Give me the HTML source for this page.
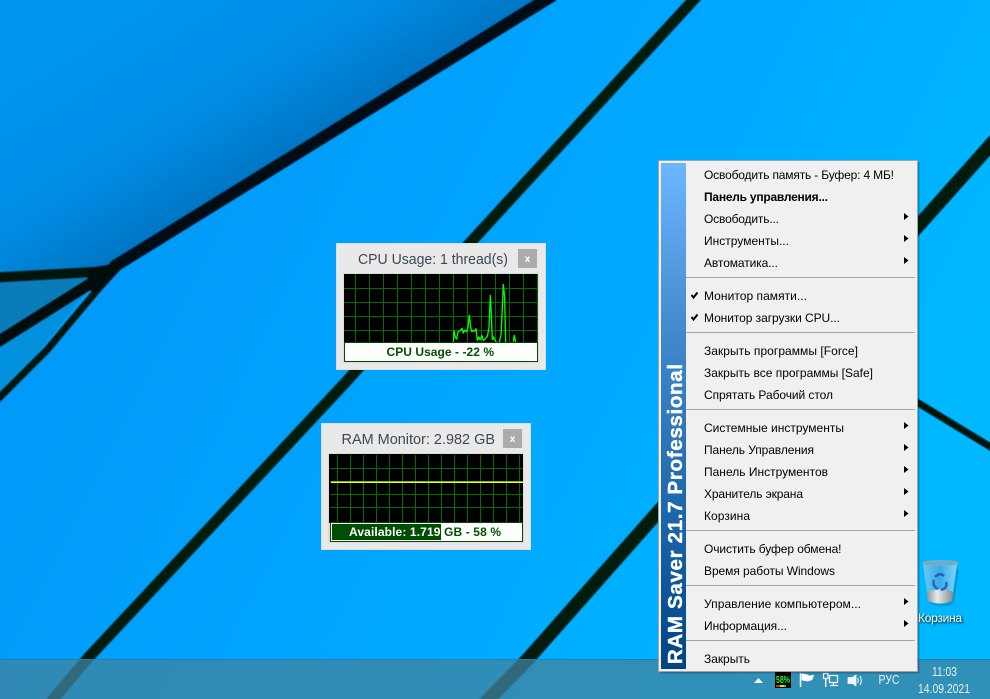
<!DOCTYPE html>
<html lang="ru"><head><meta charset="utf-8"><title>RAM Saver</title>
<style>
html,body{margin:0;padding:0;width:990px;height:699px;overflow:hidden;background:#00a8ff}
svg{display:block;position:absolute;left:0;top:0}
text{font-family:"Liberation Sans","Noto Sans CJK SC",sans-serif}
.m text{font-size:12px;fill:#000}
.t{font-size:15px;fill:#3d4853}
.s{font-size:12px;font-weight:bold}
.tray{font-size:13px;fill:#e8f2f8}
</style></head><body>
<svg width="990" height="699" viewBox="0 0 990 699" xmlns="http://www.w3.org/2000/svg">
<defs>
<linearGradient id="bg" gradientUnits="userSpaceOnUse" x1="200" y1="150" x2="900" y2="500"><stop offset="0" stop-color="#009bf8"/><stop offset=".45" stop-color="#00a6ff"/><stop offset="1" stop-color="#00b8ff"/></linearGradient>
<linearGradient id="tl" gradientUnits="userSpaceOnUse" x1="185" y1="-33" x2="300" y2="154"><stop offset="0" stop-color="#0096f0"/><stop offset=".6" stop-color="#008ce4"/><stop offset="1" stop-color="#0074c2"/></linearGradient>
<linearGradient id="side" x1="0" y1="0" x2="0" y2="1"><stop offset="0" stop-color="#6cb6ff"/><stop offset=".35" stop-color="#4088cc"/><stop offset=".7" stop-color="#1b66aa"/><stop offset="1" stop-color="#004484"/></linearGradient>
<linearGradient id="binb" x1="0" y1="0" x2="1" y2="0"><stop offset="0" stop-color="#6cc8f2"/><stop offset=".5" stop-color="#32aeec"/><stop offset="1" stop-color="#84d4f6"/></linearGradient>
<linearGradient id="bing" x1="0" y1="0" x2="1" y2="0"><stop offset="0" stop-color="#8a9296"/><stop offset=".4" stop-color="#e6ebeb"/><stop offset="1" stop-color="#80888c"/></linearGradient>
<clipPath id="av"><rect x="332" y="524" width="109" height="16"/></clipPath>
<filter id="soft" x="-5%" y="-5%" width="110%" height="110%"><feGaussianBlur stdDeviation=".5"/></filter>
</defs>

<!-- wallpaper -->
<rect width="990" height="699" fill="url(#bg)"/>
<polygon points="0,0 550,0 115,268 0,278" fill="url(#tl)"/>
<polygon points="0,279 100,272 0,341" fill="#0a7cba"/>
<polygon points="100,275 0,341 0,400" fill="#0090dc"/>
<g fill="none" stroke-linejoin="round" stroke-linecap="round" filter="url(#soft)">
<path d="M552,-4 L115,266" stroke="#000a12" stroke-width="12"/>
<path d="M-4,343 L112,270" stroke="#000a10" stroke-width="11"/>
<path d="M-4,277.500 L112,271" stroke="#03150e" stroke-width="10"/>
<path d="M104,282 L47,350 L-4,401" stroke="#03180c" stroke-width="7"/>
<path d="M697,-4 L470,243 L345,383 L88,658 L50,703" stroke="#031a0a" stroke-width="11"/>
<path d="M994,141 L920,224 L658,512 L527,660 L485,703" stroke="#031a0a" stroke-width="13.500"/>
<path d="M910,398 L994,449" stroke="#03180c" stroke-width="7"/>
<polygon points="90,268 118,263 122,268 100,292 85,290" fill="#000a10" stroke="none"/>
</g>

<!-- taskbar -->
<rect x="0" y="659" width="990" height="40" fill="#40839f" fill-opacity=".75"/>
<rect x="0" y="659" width="990" height="1" fill="#1f7fb5"/>

<!-- CPU window -->
<rect x="336" y="243" width="210" height="127" fill="#dedede"/>
<rect x="337" y="244" width="208" height="125" fill="#e9e9e9"/>
<text class="t" x="358" y="264" textLength="150" lengthAdjust="spacingAndGlyphs">CPU Usage: 1 thread(s)</text>
<rect x="518" y="249" width="19" height="19" fill="#ababab"/>
<text x="527.500" y="262" text-anchor="middle" font-size="10" font-weight="bold" fill="#fff">x</text>
<rect x="343" y="273" width="196" height="90" fill="#dcdcdc"/>
<rect x="344" y="274" width="194" height="68" fill="#000"/>
<path d="M355.500,274V342M369.500,274V342M383.500,274V342M397.500,274V342M411.500,274V342M425.500,274V342M439.500,274V342M453.500,274V342M467.500,274V342M481.500,274V342M495.500,274V342M509.500,274V342M523.500,274V342M537.500,274V342M344,288.500H538M344,302.500H538M344,316.500H538M344,330.500H538" stroke="#006f00" stroke-width="1" fill="none"/>
<svg x="330" y="240" width="220" height="135" viewBox="0 0 660 405"><path d="M370,305 L372,272 L376,292 L380,298 L384,276 L390,272 L396,265 L400,280 L404,270 L410,276 L414,262 L418,225 L422,262 L426,276 L430,270 L434,274 L438,265 L442,302 L446,290 L450,300 L456,286 L460,302 L470,292 L473,285 L477,262 L481,165 L484,225 L487,300 L490,290 L495,300 L500,307 M508,307 L513,285 L516,225 L520,132 L524,175 L527,307 M550,305 L553,285 L557,307" fill="none" stroke="#00ff00" stroke-width="4" stroke-linejoin="bevel"/></svg>
<rect x="344.500" y="342.500" width="193" height="19" fill="#fff" stroke="#004f00"/>
<text class="s" x="386.500" y="356" fill="#005000" textLength="107.500" lengthAdjust="spacing">CPU Usage - -22 %</text>

<!-- RAM window -->
<rect x="321" y="423" width="210" height="127" fill="#dedede"/>
<rect x="322" y="424" width="208" height="125" fill="#e9e9e9"/>
<text class="t" x="341.500" y="444" textLength="153.500" lengthAdjust="spacingAndGlyphs">RAM Monitor: 2.982 GB</text>
<rect x="503" y="429" width="19" height="19" fill="#ababab"/>
<text x="512.500" y="442" text-anchor="middle" font-size="10" font-weight="bold" fill="#fff">x</text>
<rect x="328" y="453" width="196" height="90" fill="#dcdcdc"/>
<rect x="329" y="454" width="194" height="69" fill="#000"/>
<path d="M337.500,455V523M350.500,455V523M363.500,455V523M376.500,455V523M389.500,455V523M402.500,455V523M415.500,455V523M428.500,455V523M441.500,455V523M454.500,455V523M467.500,455V523M480.500,455V523M493.500,455V523M506.500,455V523M519.500,455V523M330,468.500H523M330,481.500H523M330,494.500H523M330,507.500H523" stroke="#006f00" stroke-width="1" fill="none"/>
<rect x="331" y="481.500" width="192" height="1.500" fill="#ffff00"/>
<rect x="330.500" y="522.500" width="192" height="19" fill="#fff" stroke="#004f00"/>
<text class="s" x="349" y="536" fill="#005000" textLength="152" lengthAdjust="spacing">Available: 1.719 GB - 58 %</text>
<rect x="332" y="524" width="109" height="16" fill="#004f00"/>
<g clip-path="url(#av)"><text class="s" x="349" y="536" fill="#fff" textLength="152" lengthAdjust="spacing">Available: 1.719 GB - 58 %</text></g>

<!-- Recycle bin -->
<g>
<path d="M924,566 L928,600 Q940,607 952,600 L957,566 Z" fill="#0a5a8a" opacity=".3" transform="translate(2,3)"/>
<path d="M923,564 L928,600 Q940,606 952,600 L957,564 Z" fill="url(#binb)"/>
<path d="M926.500,592 Q940,587 953.500,592 L952,601 Q940,606 928,601 Z" fill="url(#bing)"/>
<ellipse cx="940.500" cy="563" rx="17.500" ry="2.200" fill="#4fb6e8" stroke="#9aa4a8" stroke-width="1.300"/>
<path d="M935,577 Q940,572 944,576 M934,580 Q932,586 938,589 M946,582 Q948,588 941,590" fill="none" stroke="#2a62b8" stroke-width="2.500"/>
</g>
<text x="918" y="622" font-size="12" fill="#fff" textLength="44" lengthAdjust="spacing" style="filter:drop-shadow(1px 1px 1px #000)">Корзина</text>

<!-- Tray -->
<polygon points="754,683 763,683 758.500,678" fill="#f0f6fa"/>
<rect x="775" y="672" width="16" height="16" fill="#000"/>
<text x="776" y="683" font-size="10.500" font-weight="bold" fill="#1dff1d" textLength="14" lengthAdjust="spacingAndGlyphs">58%</text>
<rect x="776" y="685" width="4" height="2" fill="#e02020"/><rect x="780" y="685" width="4" height="2" fill="#f0e000"/><rect x="784" y="685" width="2" height="2" fill="#20e020"/>
<g fill="none" stroke="#f2f6f8">
<path d="M800.500,673V687" stroke-width="1.500"/>
<path d="M802,674 L808,675 L808,681 L802,680 Z" fill="#fff" stroke-width="1"/>
<path d="M808,676 L814,675 L812,680 L808,681 Z" fill="#fff" stroke="#dfe8ee" stroke-width=".500"/>
<rect x="829.500" y="675.500" width="8" height="7" stroke-width="1.300"/>
<path d="M830,685.500H838M833.500,683V685" stroke-width="1.300"/>
<rect x="823.500" y="673.500" width="4.500" height="5" stroke-width="1.200"/>
<path d="M825.700,679V687" stroke-width="1.500"/>
<path d="M852.500,677.500 L856,675 V686 L852.500,683.500 H848 V677.500 Z" fill="#f2f6f8" stroke-width=".800"/>
<path d="M857.500,678 Q859,680.500 857.500,683 M860,676 Q862.500,680.500 860,685" stroke-width="1.100"/>
</g>
<text class="tray" x="878.500" y="684" textLength="21" lengthAdjust="spacingAndGlyphs">РУС</text>
<text class="tray" x="932" y="676" textLength="25" lengthAdjust="spacingAndGlyphs">11:03</text>
<text class="tray" x="918" y="693" textLength="52" lengthAdjust="spacingAndGlyphs">14.09.2021</text>

<!-- Menu -->
<rect x="660" y="162" width="259.500" height="511.500" fill="#000" opacity=".22"/>
<rect x="658.500" y="160.500" width="259" height="511" fill="#f0f0f0" stroke="#a3a3a3"/>
<rect x="661" y="163" width="25" height="506" fill="url(#side)"/>
<text transform="translate(682,664) rotate(-90)" font-size="20.500" font-weight="bold" fill="#fff" stroke="#fff" stroke-width=".4" textLength="300" lengthAdjust="spacing">RAM Saver 21.7 Professional</text>
<g fill="#a6a6a6">
<rect x="686" y="277" width="229" height="1"/><rect x="686" y="332" width="229" height="1"/><rect x="686" y="409" width="229" height="1"/><rect x="686" y="530" width="229" height="1"/><rect x="686" y="585" width="229" height="1"/><rect x="686" y="640" width="229" height="1"/>
</g>
<g class="m">
<text x="704" y="179" textLength="190" lengthAdjust="spacing">Освободить память - Буфер: 4 МБ!</text>
<text x="704" y="201" textLength="124" lengthAdjust="spacing" font-weight="bold">Панель управления...</text>
<text x="704" y="223" textLength="75" lengthAdjust="spacing">Освободить...</text>
<text x="704" y="245" textLength="85" lengthAdjust="spacing">Инструменты...</text>
<text x="704" y="267" textLength="74" lengthAdjust="spacing">Автоматика...</text>
<text x="704" y="300" textLength="103" lengthAdjust="spacing">Монитор памяти...</text>
<text x="704" y="322" textLength="136" lengthAdjust="spacing">Монитор загрузки CPU...</text>
<text x="704" y="355" textLength="154" lengthAdjust="spacing">Закрыть программы [Force]</text>
<text x="704" y="377" textLength="169" lengthAdjust="spacing">Закрыть все программы [Safe]</text>
<text x="704" y="399" textLength="129" lengthAdjust="spacing">Спрятать Рабочий стол</text>
<text x="704" y="432" textLength="140" lengthAdjust="spacing">Системные инструменты</text>
<text x="704" y="454" textLength="110" lengthAdjust="spacing">Панель Управления</text>
<text x="704" y="476" textLength="124" lengthAdjust="spacing">Панель Инструментов</text>
<text x="704" y="498" textLength="99" lengthAdjust="spacing">Хранитель экрана</text>
<text x="704" y="520" textLength="46" lengthAdjust="spacing">Корзина</text>
<text x="704" y="553" textLength="137.500" lengthAdjust="spacing">Очистить буфер обмена!</text>
<text x="704" y="575" textLength="131" lengthAdjust="spacing">Время работы Windows</text>
<text x="704" y="608" textLength="157" lengthAdjust="spacing">Управление компьютером...</text>
<text x="704" y="630" textLength="83" lengthAdjust="spacing">Информация...</text>
<text x="704" y="663" textLength="46" lengthAdjust="spacing">Закрыть</text>
</g>
<g fill="#000">
<path d="M904,213V220L908.500,216.500Z"/><path d="M904,235V242L908.500,238.500Z"/><path d="M904,257V264L908.500,260.500Z"/>
<path d="M904,422V429L908.500,425.500Z"/><path d="M904,444V451L908.500,447.500Z"/><path d="M904,466V473L908.500,469.500Z"/><path d="M904,488V495L908.500,491.500Z"/><path d="M904,510V517L908.500,513.500Z"/>
<path d="M904,598V605L908.500,601.500Z"/><path d="M904,620V627L908.500,623.500Z"/>
</g>
<path d="M691.500,295 L693.500,297.500 L697.500,292.500M691.500,317 L693.500,319.500 L697.500,314.500" fill="none" stroke="#000" stroke-width="2"/>
</svg>
</body></html>
